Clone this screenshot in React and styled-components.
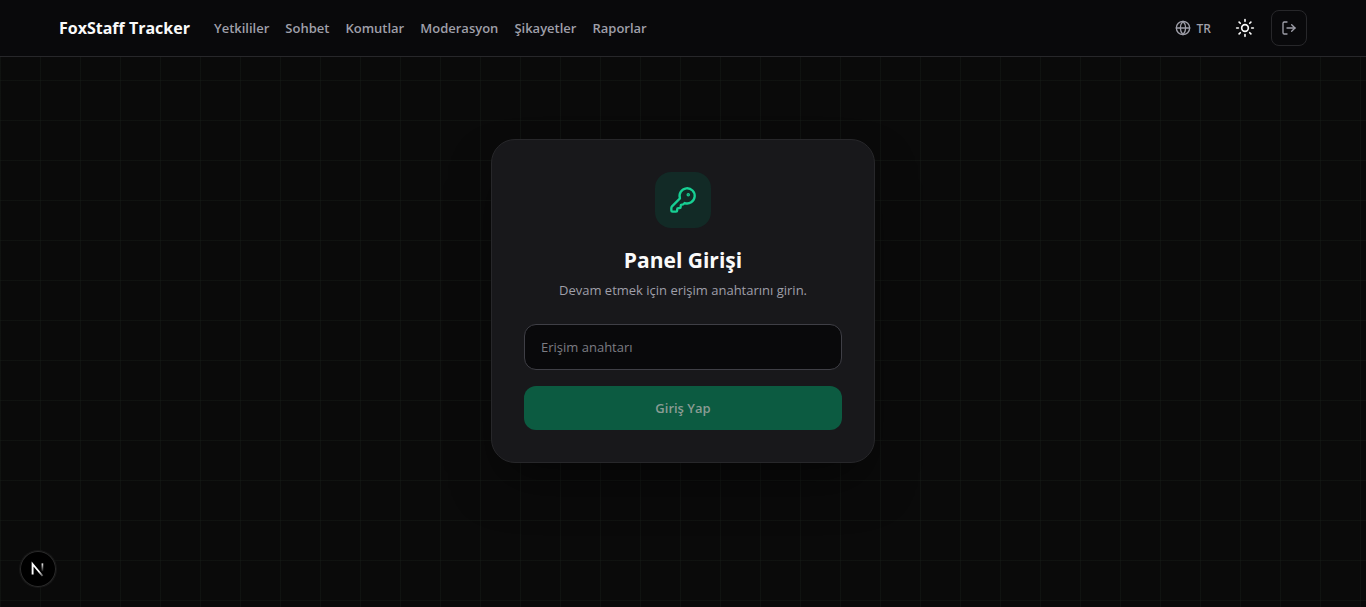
import { useState } from "react";
import styled, { createGlobalStyle } from "styled-components";
import { Globe, KeyRound, LogOut, Sun } from "lucide-react";

const links = ["Yetkililer", "Sohbet", "Komutlar", "Moderasyon", "Şikayetler", "Raporlar"];

const App = () => {
    const [key, setKey] = useState("");

    return (
        <Page>
            <GlobalStyle />
            <Header>
                <HeaderInner>
                    <Brand href="#">FoxStaff Tracker</Brand>
                    <Nav>
                        {links.map((link) => (
                            <NavLink href="#" key={link}>{link}</NavLink>
                        ))}
                    </Nav>
                    <Actions>
                        <LangButton type="button">
                            <Globe size={16} />
                            TR
                        </LangButton>
                        <IconButton type="button" aria-label="Tema">
                            <Sun size={20} />
                        </IconButton>
                        <IconButton type="button" aria-label="Çıkış" $outlined>
                            <LogOut size={16} />
                        </IconButton>
                    </Actions>
                </HeaderInner>
            </Header>
            <Main>
                <Card>
                    <KeyBadge>
                        <KeyRound size={28} />
                    </KeyBadge>
                    <Title>Panel Girişi</Title>
                    <Subtitle>Devam etmek için erişim anahtarını girin.</Subtitle>
                    <Form onSubmit={(e) => e.preventDefault()}>
                        <KeyInput
                            type="password"
                            aria-label="Erişim anahtarı"
                            placeholder="Erişim anahtarı"
                            value={key}
                            onChange={(e) => setKey(e.target.value)}
                        />
                        <SubmitButton type="submit" disabled={!key}>Giriş Yap</SubmitButton>
                    </Form>
                </Card>
            </Main>
            <DevBadge type="button" aria-label="Next.js">
                <NextLogo />
            </DevBadge>
        </Page>
    );
};

const NextLogo = () => (
    <svg width="36" height="36" viewBox="0 0 36 36" fill="none">
        <defs>
            <linearGradient id="diagonal" x1="17" y1="18" x2="24" y2="26" gradientUnits="userSpaceOnUse">
                <stop offset="0.3" stopColor="#fff" />
                <stop offset="1" stopColor="#fff" stopOpacity="0.1" />
            </linearGradient>
            <linearGradient id="stem" x1="23" y1="12" x2="23" y2="21" gradientUnits="userSpaceOnUse">
                <stop stopColor="#fff" />
                <stop offset="1" stopColor="#fff" stopOpacity="0" />
            </linearGradient>
        </defs>
        <path d="M12.6 23.6V13L22.6 25" stroke="url(#diagonal)" strokeWidth="1.9" />
        <path d="M22.4 12.4V20.5" stroke="url(#stem)" strokeWidth="1.7" />
    </svg>
);

const GlobalStyle = createGlobalStyle`
*{
    box-sizing: border-box;
}
body{
    margin: 0;
    background-color: #0a0a0a;
    color: #fafafa;
    font-family: "Open Sans", "Noto Sans", sans-serif;
}
button, input{
    font-family: inherit;
}
`;

const Page = styled.div`
min-height: 100vh;
background-color: #0a0a0a;
background-image:
    linear-gradient(to right, rgba(34, 44, 36, 0.24) 1px, transparent 1px),
    linear-gradient(to bottom, rgba(34, 44, 36, 0.24) 1px, transparent 1px);
background-size: 40px 40px;
`;

const Header = styled.header`
background-color: #09090b;
border-bottom: 1px solid #27272a;
`;

const HeaderInner = styled.div`
display: flex;
align-items: center;
gap: 24px;
max-width: 1280px;
height: 56px;
margin: 0 auto;
padding: 0 16px;
`;

const Brand = styled.a`
color: #fafafa;
font-size: 16px;
line-height: 28px;
font-weight: 700;
text-decoration: none;
white-space: nowrap;
`;

const Nav = styled.nav`
display: flex;
flex: 1;
gap: 16px;
`;

const NavLink = styled.a`
color: #9f9fa9;
font-size: 13px;
line-height: 20px;
font-weight: 600;
text-decoration: none;
`;

const Actions = styled.div`
display: flex;
align-items: center;
gap: 8px;
`;

const LangButton = styled.button`
display: flex;
align-items: center;
gap: 6px;
height: 36px;
padding: 0 8px;
border: none;
background: transparent;
color: #9f9fa9;
font-size: 12px;
font-weight: 600;
cursor: pointer;
`;

const IconButton = styled.button`
display: flex;
align-items: center;
justify-content: center;
width: 36px;
height: 36px;
padding: 0;
border: 1px solid ${(props) => (props.$outlined ? "#27272a" : "transparent")};
border-radius: 8px;
background: transparent;
color: ${(props) => (props.$outlined ? "#9f9fa9" : "#fafafa")};
cursor: pointer;
`;

const Main = styled.main`
display: flex;
align-items: center;
justify-content: center;
min-height: 70vh;
margin: 32px 16px;
`;

const Card = styled.section`
display: flex;
flex-direction: column;
align-items: center;
width: 100%;
max-width: 384px;
padding: 32px;
border: 1px solid #27272a;
border-radius: 24px;
background-color: #18181b;
box-shadow: 0 25px 50px -12px rgba(0, 0, 0, 0.5);
`;

const KeyBadge = styled.div`
display: flex;
align-items: center;
justify-content: center;
width: 56px;
height: 56px;
border-radius: 16px;
background-color: #122a26;
color: #17cf93;
`;

const Title = styled.h1`
margin: 16px 0 0;
font-size: 21px;
line-height: 32px;
font-weight: 700;
`;

const Subtitle = styled.p`
margin: 4px 0 0;
color: #9f9fa9;
font-size: 13px;
line-height: 20px;
text-align: center;
`;

const Form = styled.form`
display: flex;
flex-direction: column;
gap: 16px;
width: 100%;
margin-top: 24px;
`;

const KeyInput = styled.input`
width: 100%;
height: 46px;
padding: 12px 16px;
border: 1px solid #3f3f46;
border-radius: 12px;
outline: none;
background-color: #09090b;
color: #fafafa;
font-size: 13px;
line-height: 20px;
&::placeholder{
    color: #7c7c83;
}
`;

const SubmitButton = styled.button`
height: 44px;
border: none;
border-radius: 12px;
background-color: #009966;
color: #fff;
font-size: 13px;
line-height: 20px;
font-weight: 600;
cursor: pointer;
&:disabled{
    background-color: #0c5b41;
    color: #8a9c94;
    cursor: default;
}
`;

const DevBadge = styled.button`
position: fixed;
left: 20px;
bottom: 20px;
width: 36px;
height: 36px;
padding: 0;
border: none;
border-radius: 50%;
background-color: #000;
box-shadow: 0 0 0 1px #171717, inset 0 0 0 1px #2a2a2a;
svg{
    display: block;
}
`;

export default App;
